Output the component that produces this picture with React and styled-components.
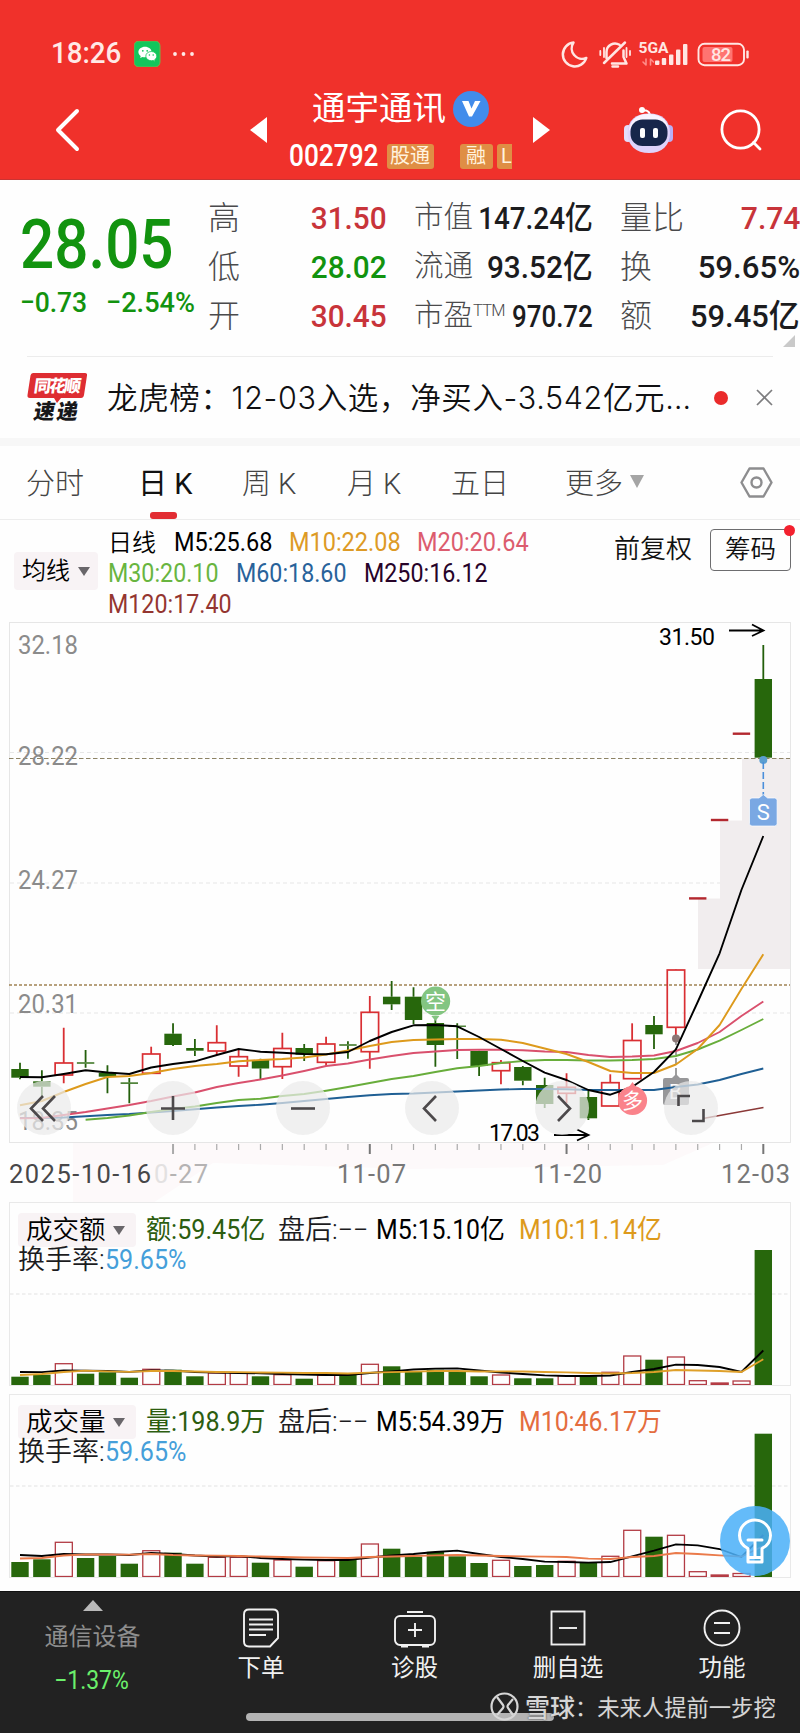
import React from "react";
import styled, { createGlobalStyle } from "styled-components";

const GlobalStyle = createGlobalStyle`
  * { box-sizing: border-box; }
  body {
    margin: 0;
    background: #fff;
    font-family: Roboto, "Noto Sans CJK SC", sans-serif;
    color: #1c1c1e;
  }
`;

const RED = "#c8343a";
const GREEN = "#12930f";
const BAR_GREEN = "#27670c";
const BAR_RED = "#d92f33";

const Page = styled.div`
  position: relative;
  width: 800px;
  height: 1733px;
  overflow: hidden;
  background: #fefefe;
`;

/* text whose glyphs are narrowed, $s is the horizontal scale */
const Num = styled.span`
  display: inline-block;
  white-space: nowrap;
  line-height: 1;
  font-size: ${(p) => p.$size || 25}px;
  font-weight: ${(p) => p.$weight || 400};
  color: ${(p) => p.$color || "#1c1c1e"};
  letter-spacing: ${(p) => p.$ls || 0}px;
  transform: scaleX(${(p) => p.$s || 1});
  transform-origin: ${(p) => p.$origin || "left"} center;
`;

/* ---------- header ---------- */

const HeaderWrapper = styled.header`
  height: 180px;
  padding-top: 39px;
  background: #f0312b;
  border-bottom: 1px solid #c93433;
`;

const StatusBar = styled.div`
  display: flex;
  align-items: center;
  height: 29px;
  padding: 0 51px 0 51px;
`;

const StatusIcons = styled.div`
  display: flex;
  align-items: center;
  margin-left: auto;
`;

const NavRow = styled.div`
  display: flex;
  align-items: center;
  height: 100px;
  padding: 24px 0 0 54px;
`;

const TitleBlock = styled.div`
  display: flex;
  flex-direction: column;
  justify-content: space-between;
  width: 223px;
  height: 90px;
  margin: 5px 21px 0 22px;
`;

const TitleLine = styled.div`
  display: flex;
  align-items: center;
  height: 42px;
  padding-left: 23px;
  font-size: 33.5px;
  line-height: 1;
  color: #fff;
`;

const Verified = styled.span`
  display: flex;
  align-items: center;
  justify-content: center;
  width: 36px;
  height: 36px;
  margin-left: 7px;
  border-radius: 50%;
  background: #428ceb;
`;

const CodeLine = styled.div`
  display: flex;
  align-items: center;
  height: 42px;
  overflow: hidden;
`;

const CodeText = styled.div`
  width: 98px;
`;

const Tag = styled.span`
  flex: none;
  width: ${(p) => p.$w}px;
  height: 25px;
  margin-right: ${(p) => p.$gap || 0}px;
  padding-left: ${(p) => p.$pad || 0}px;
  border-radius: ${(p) => (p.$cut ? "3px 0 0 3px" : "3px")};
  background: #df8e45;
  color: #fff3df;
  font-size: 20px;
  line-height: 24px;
  white-space: nowrap;
`;

/* ---------- quote ---------- */

const Quote = styled.section`
  display: grid;
  grid-template-columns: 189px 178px 178px 179px;
  column-gap: 0;
  height: 176px;
  padding: 13px 0 0 20px;
  position: relative;
`;

const PriceBox = styled.div`
  display: flex;
  flex-direction: column;
  padding-top: 18px;
`;

const Changes = styled.div`
  display: flex;
  gap: 14px;
  margin-top: 10px;
`;

const QuoteCol = styled.div`
  display: grid;
  grid-template-rows: repeat(3, 49px);
  margin-left: ${(p) => p.$shift || 0}px;
  margin-right: -${(p) => p.$shift || 0}px;
`;

const QuoteCell = styled.div`
  display: flex;
  justify-content: space-between;
  align-items: center;
`;

const QuoteLabel = styled.span`
  margin-left: -1px;
  font-size: ${(p) => p.$size || 31}px;
  font-weight: 300;
  line-height: 1;
  color: #4a4a4c;
  white-space: nowrap;

  sup {
    font-size: 16.5px;
    line-height: 0;
    vertical-align: 9px;
    letter-spacing: -0.8px;
  }
`;

const QuoteValue = styled(Num)`
  margin-left: -40px;
`;

const Corner = styled.i`
  position: absolute;
  right: 5px;
  bottom: 9px;
  border-left: 12px solid transparent;
  border-bottom: 12px solid #c9c9c9;
`;

/* ---------- news ---------- */

const News = styled.section`
  display: flex;
  align-items: center;
  height: 82px;
  margin: 0 27px;
  border-top: 1px solid #ececec;
`;

const NewsBadge = styled.div`
  width: 60px;
  height: 50px;
`;

const NewsText = styled.div`
  width: 597px;
  margin-left: 20px;
  padding-bottom: 3px;
  font-family: Inter, "Noto Sans CJK SC", sans-serif;
  font-size: 30.5px;
  font-weight: 350;
  letter-spacing: 0.65px;
  white-space: nowrap;
  color: #101012;
`;

const Dot = styled.i`
  width: 14px;
  height: 14px;
  margin: 0 28px 0 10px;
  border-radius: 50%;
  background: #ea2b2b;
  flex: none;
`;

/* ---------- tabs ---------- */

const Tabs = styled.nav`
  display: grid;
  grid-template-columns: 112px 104px 105px 104px 114px 1fr auto;
  height: 82px;
  padding: 0 27px 0 26px;
  border-top: 8px solid #f7f7f7;
  border-bottom: 1px solid #ededed;
`;

const Tab = styled.div`
  position: relative;
  display: flex;
  align-items: center;
  gap: 7px;
  padding-bottom: ${(p) => (p.$icon ? 0 : 3)}px;
  font-size: 29px;
  font-weight: ${(p) => (p.$active ? 400 : 300)};
  color: ${(p) => (p.$active ? "#111" : "#444")};

  &::after {
    content: "";
    display: ${(p) => (p.$active ? "block" : "none")};
    position: absolute;
    left: 12px;
    bottom: 0;
    width: 27px;
    height: 7px;
    border-radius: 3px;
    background: #e22d33;
  }
`;

const Down = styled.i`
  border: ${(p) => p.$w / 2}px solid transparent;
  border-top: ${(p) => p.$h}px solid ${(p) => p.$color};
  border-bottom: 0;
`;

/* ---------- MA legend ---------- */

const Legend = styled.section`
  display: flex;
  height: 102px;
  padding: 7px 9px 0 14px;
`;

const Picker = styled.div`
  display: flex;
  align-items: center;
  gap: ${(p) => p.$gap || 8}px;
  flex: none;
  width: ${(p) => p.$w}px;
  height: ${(p) => p.$h}px;
  margin-top: ${(p) => p.$mt || 0}px;
  padding-left: 8px;
  border-radius: 4px;
  background: #f8f3f5;
  font-size: ${(p) => p.$size}px;
  font-weight: 350;
  white-space: nowrap;
  line-height: 1;
  color: #000;
`;

const LegendRows = styled.div`
  display: flex;
  flex-direction: column;
  width: 506px;
  margin-left: 10px;
`;

const LegendRow = styled.div`
  display: flex;
  align-items: center;
  height: 31px;
`;

const LegendCell = styled.div`
  width: ${(p) => p.$w}px;
`;

const LegendActions = styled.div`
  display: flex;
  height: 45px;
  font-size: 26px;
  font-weight: 350;
  line-height: 44px;
  color: #111;
`;

const ChipsButton = styled.div`
  position: relative;
  width: 81px;
  height: 42px;
  margin: 2px 0 0 18px;
  border: 1px solid #6d6d6f;
  border-radius: 4px;
  text-align: center;
  font-size: 25.5px;
  line-height: 38px;

  &::after {
    content: "";
    position: absolute;
    right: -5px;
    top: -5px;
    width: 11px;
    height: 11px;
    border-radius: 50%;
    background: #f3202e;
  }
`;

/* ---------- charts ---------- */

const ChartArea = styled.section`
  position: relative;
  height: 580px;

  svg { display: block; }
`;

const Controls = styled.div`
  position: absolute;
  left: 17px;
  top: 459px;
  display: flex;
  gap: 75.4px;
`;

const RoundButton = styled.button`
  width: 54px;
  height: 54px;
  padding: 0;
  border: 0;
  border-radius: 50%;
  background: rgba(234, 234, 234, 0.72);
`;

const VolPanel = styled.section`
  position: relative;
  display: grid;
  height: 184px;
  margin: 0 9px ${(p) => p.$mb || 0}px 9px;
  border: 1px solid #e9e9e9;

  > * { grid-area: 1 / 1; }
`;

const VolHead = styled.div`
  padding: 9px 0 0 8px;
`;

const VolRow = styled.div`
  display: flex;
  align-items: center;
  height: ${(p) => p.$h}px;
`;

const VolCell = styled.div`
  flex: none;
  width: ${(p) => p.$w}px;
  white-space: nowrap;
`;

const BulbButton = styled.div`
  position: absolute;
  left: 720px;
  top: 1506px;
  width: 70px;
  height: 70px;
  border-radius: 50%;
  background: rgba(75, 176, 248, 0.86);
`;

/* ---------- bottom bar ---------- */

const BottomBar = styled.footer`
  display: grid;
  grid-template-columns: 185px 152px 155px 152px 156px;
  height: 143px;
  margin-top: 13px;
  border-top: 1px solid #111;
  background: #222;
`;

const BottomItem = styled.div`
  display: flex;
  flex-direction: column;
  align-items: center;
  padding-top: ${(p) => p.$top || 15}px;
  color: #f1f1f1;
  font-size: 23.5px;
  line-height: 34px;

  svg { display: block; }
`;

const Sector = styled.span`
  margin-top: 9px;
  color: #8e8e8e;
  font-size: 24px;
`;

const SectorChange = styled.div`
  margin: 14px 3px 0 0;
  line-height: 1;
`;

const HomeLine = styled.i`
  position: absolute;
  left: 246px;
  top: 1713px;
  width: 308px;
  height: 8px;
  border-radius: 4px;
  background: #b4b4b4;
`;

const Watermark = styled.div`
  position: absolute;
  left: 490px;
  top: 1690px;
  display: flex;
  align-items: center;
  height: 32px;
  color: #d6d6d6;
  font-size: 22.3px;
  white-space: nowrap;
  text-shadow: 0 0 2px #333;

  b { font-size: 25px; font-weight: 500; margin-left: 6px; }
`;

/* ---------- data ---------- */

const STEP = 21.862;
const cx = (i) => 20 + i * STEP;

// [up, high, top, bottom, low]
const CANDLES = [
  [0, 1062.7, 1069, 1077.7, 1079.3], [0, 1070.3, 1081.3, 1086.7, 1096],
  [1, 1027.7, 1063, 1075, 1083.3], [0, 1050, 1062.3, 1063.7, 1067.7],
  [0, 1065.3, 1072.7, 1076.7, 1093.3], [0, 1078, 1082.4, 1083.8, 1103.3],
  [1, 1046.7, 1054, 1073.3, 1073.3], [0, 1023.3, 1033.7, 1045, 1046],
  [0, 1039, 1048, 1050.7, 1056], [1, 1025.3, 1042.7, 1051, 1055],
  [1, 1050, 1056.7, 1066, 1076.7], [0, 1058.7, 1060, 1068.5, 1079],
  [1, 1032.7, 1048.5, 1066.7, 1079], [0, 1044, 1048, 1054.7, 1061],
  [1, 1036.7, 1044, 1062.3, 1066], [0, 1041.3, 1044.3, 1045.7, 1058.7],
  [1, 996, 1012.3, 1051.7, 1068.7], [0, 981, 996.7, 1004.3, 1010],
  [0, 987.3, 996.7, 1020, 1024], [0, 1019.3, 1023, 1045, 1066.7],
  [0, 1023.3, 1025.6, 1026.8, 1059], [0, 1050.7, 1051, 1066, 1076],
  [1, 1060, 1062.7, 1070.7, 1084.3], [0, 1066, 1067, 1080.7, 1085.3],
  [0, 1077.7, 1085, 1104, 1108], [1, 1073.3, 1087.3, 1093.3, 1103],
  [0, 1090.7, 1097, 1118.3, 1120], [1, 1074.3, 1082.7, 1106, 1106],
  [1, 1023.3, 1040.5, 1078.7, 1078.7], [0, 1016, 1025, 1034.3, 1049],
  [1, 969.5, 970, 1027.3, 1038], [1, 898.4, 898.4, 898.4, 898.4],
  [1, 820, 820, 820, 820], [1, 733.7, 733.7, 733.7, 733.7],
  [0, 645, 679, 757.7, 757.7],
];

const MA = [
  { color: "#1f5f94", from: 0, y: [1118, 1118, 1117.5, 1116.3, 1115, 1114, 1112.5, 1111, 1109.3, 1107.5, 1106, 1104.7, 1103, 1101, 1099, 1097, 1095.3, 1094, 1093.5, 1092.5, 1091.5, 1090.5, 1089.5, 1089, 1089, 1089.3, 1090, 1090, 1090, 1090, 1087, 1084.5, 1080, 1074, 1068.5] },
  { color: "#68ad3b", from: 3, y: [1119.7, 1118, 1115.5, 1112, 1109, 1106.5, 1103, 1100, 1098.7, 1096, 1094, 1090.7, 1087, 1083, 1079, 1076, 1072, 1068.3, 1066, 1063, 1061, 1060, 1060, 1060.5, 1060.5, 1060, 1059, 1056, 1049.5, 1040.7, 1030, 1019] },
  { color: "#d9506d", from: 0, y: [1118.3, 1118, 1115, 1112, 1108.5, 1105, 1101, 1096.5, 1092.5, 1087, 1083, 1079.5, 1075.5, 1071, 1066, 1063.5, 1059.5, 1056, 1053, 1051.5, 1050, 1049.7, 1049.7, 1050.3, 1051.5, 1052, 1055, 1057, 1056.5, 1055.5, 1051, 1043, 1032, 1016, 1001.5] },
  { color: "#dd9a1c", from: 0, y: [1105.3, 1101, 1092, 1084, 1077, 1076, 1073, 1069, 1066, 1064, 1061.3, 1060, 1059, 1057.5, 1054.5, 1050.5, 1046, 1042, 1040, 1039.5, 1039, 1039, 1039.7, 1043, 1048.5, 1054, 1062, 1071, 1073, 1073, 1064.5, 1049, 1025, 989, 954.3] },
  { color: "#000", from: 0, y: [1077, 1077.3, 1074, 1070.3, 1072.5, 1074, 1067.5, 1064, 1061.3, 1055, 1049, 1051.7, 1052.7, 1054, 1054.3, 1052, 1041, 1032, 1025.3, 1025, 1026.3, 1037, 1049, 1061, 1072.7, 1080, 1090, 1094.7, 1087, 1072, 1049.3, 1002, 953.3, 890, 836] },
];

const AMOUNT = {
  bars: [8.3, 10.3, 21.3, 11.3, 12.7, 7.3, 15.7, 15.3, 8.7, 12, 12, 8.7, 10.3, 6.3, 9.7, 10.3, 20.7, 18.7, 13, 15.3, 13.3, 8.7, 10, 6.7, 6.7, 9.3, 8.7, 12.7, 29, 25.3, 28, 4.3, 2, 4, 135],
  ma5: [13, 12.8, 14.5, 14.3, 14, 13.2, 14.5, 14.3, 13, 12.5, 12, 11.7, 11, 10.5, 10, 10, 12, 13.7, 15.5, 16.3, 16.7, 14.5, 12.5, 11, 9.7, 9, 9, 9.5, 13, 16, 20.3, 20, 18, 13, 34.5],
  ma10: [10, 11, 13, 14.3, 13.7, 13.2, 14, 14, 13.5, 13, 12.8, 12.5, 12.3, 12, 12, 11.5, 12.3, 12.8, 13.3, 14, 14, 13.5, 13.7, 13.5, 13, 12.7, 12, 11.5, 12, 13, 15, 14.5, 14, 13, 25.7],
};

const VOLUME = {
  bars: [15, 17.7, 34.7, 19, 21, 13.3, 26.3, 24.3, 13.3, 19.7, 19.7, 14.3, 17, 10.3, 16.3, 17, 33, 28.3, 20.3, 25.3, 20.7, 14, 16.7, 11, 12, 15.7, 14.3, 20.7, 46.7, 40.3, 41.7, 5.3, 2, 3.5, 143.3],
  ma5: [22, 21, 23, 22.5, 22.7, 22, 24, 23, 21.5, 20.5, 21, 19, 18, 17.3, 17, 17, 19.5, 21.5, 23, 25, 26.3, 23, 20, 18, 15.3, 15, 14.3, 15, 20.7, 26.3, 32.7, 31.7, 28, 20, 42],
  ma10: [18.5, 19, 21.5, 22.7, 22.5, 22.3, 23, 22, 21.5, 21.3, 21, 20.5, 20, 19.5, 19.3, 19, 20, 20.5, 21, 21.7, 22, 21.5, 21, 20.7, 20.3, 20, 18.3, 18, 20, 21, 24, 23, 21.7, 20.3, 31],
};

const line = (ys, from = 0) => ys.map((y, i) => `${cx(i + from).toFixed(1)},${y}`).join(" ");

/* ---------- components ---------- */

const Header = () => (
  <HeaderWrapper>
    <StatusBar>
      <Num $size={29.5} $color="#ffe9e6" $weight={500} $s={0.94}>18:26</Num>
      <svg width="64" height="26" viewBox="0 0 64 26" style={{ marginLeft: 8 }}>
        <rect width="26" height="26" rx="5" fill="#13c65c" stroke="#74b24b" />
        <path d="M11 5.8c-3.7 0-6.6 2.3-6.6 5.3 0 1.7.9 3.1 2.3 4l-.5 2 2.3-1.2c.8.2 1.6.4 2.5.4 3.7 0 6.6-2.3 6.6-5.2S14.700 5.800 11 5.800z" fill="#fff" />
        <path d="M17.300 10.500c-3 0-5.500 2-5.500 4.600s2.500 4.600 5.500 4.600c.7 0 1.300-.1 1.900-.3l1.900 1-.4-1.700c1.300-.8 2.100-2.100 2.100-3.600 0-2.600-2.500-4.600-5.500-4.600z" fill="#fff" stroke="#13c65c" strokeWidth=".8" />
        <g fill="#13c65c">
          <circle cx="8.800" cy="9.800" r=".9" /><circle cx="13.200" cy="9.800" r=".9" />
          <circle cx="15.400" cy="14" r=".8" /><circle cx="19.200" cy="14" r=".8" />
        </g>
        <g fill="#ffe9e6">
          <circle cx="41" cy="13" r="1.900" /><circle cx="49.500" cy="13" r="1.900" /><circle cx="58" cy="13" r="1.900" />
        </g>
      </svg>
      <StatusIcons>
        <svg width="188" height="30" viewBox="561 38 188 30" fill="none" stroke="#ffe6e3" strokeWidth="2.500" strokeLinejoin="round" strokeLinecap="round">
          <path d="M573.500 41.500a12 12 0 1 0 12.800 15.500a10.500 10.500 0 0 1-12.800-15.500z" />
          <path d="M606.500 57v-6a8.500 8.500 0 0 1 13-7.200M623.500 49.500v6.500l3 6.500h-14.500M612.500 65.500h5.500M604 62l21-20.500" />
          <path d="M600.300 50v4M604 47v9M630 50v4M626.500 47v9" strokeWidth="1.800" />
          <g fill="#ffe6e3" stroke="none">
            <rect x="655" y="59.500" width="4.400" height="4.500" rx="1" /><rect x="661.800" y="57" width="4.400" height="7" rx="1" />
            <rect x="669" y="53.500" width="4.400" height="10.500" rx="1" /><rect x="676" y="48.500" width="4.400" height="15.500" rx="1" />
            <rect x="683" y="43" width="4.400" height="21" rx="1" />
            <rect x="702.500" y="46" width="30" height="15" rx="2" fill="#ff7471" />
            <rect x="746.300" y="49.500" width="2.400" height="8" rx="1" />
            <text x="638.500" y="51.500" fontSize="15" fontWeight="700" textLength="30" lengthAdjust="spacingAndGlyphs">5GA</text>
            <text x="711" y="60" fontSize="18.500" fontWeight="500" textLength="20">82</text>
          </g>
          <path d="M646 58v6l-3-3M650.500 64v-6l3 3" stroke="#ff8d89" strokeWidth="1.600" />
          <rect x="698.500" y="42.800" width="45.500" height="21.400" rx="6" strokeWidth="1.900" />
        </svg>
      </StatusIcons>
    </StatusBar>
    <NavRow>
      <svg width="26" height="46" viewBox="0 0 26 46" fill="none" stroke="#fff" strokeWidth="4" strokeLinecap="round" strokeLinejoin="round">
        <path d="M23 4L4 23l19 19" />
      </svg>
      <svg width="17" height="26" viewBox="0 0 17 26" style={{ marginLeft: 170 }}>
        <path d="M0 13L17 0v26z" fill="#fff" />
      </svg>
      <TitleBlock>
        <TitleLine>
          通宇通讯
          <Verified>
            <svg width="19" height="17" viewBox="0 0 19 17"><path d="M0 1h6.500l3 7.500L13 1h5.500L10 16.500H7z" fill="#fff" /></svg>
          </Verified>
        </TitleLine>
        <CodeLine>
          <CodeText><Num $size={30.5} $color="#fff" $weight={500} $s={0.86}>002792</Num></CodeText>
          <Tag $w={47} $gap={26} $pad={3}>股通</Tag>
          <Tag $w={33} $gap={4} $pad={6}>融</Tag>
          <Tag $w={15} $pad={4} $cut>L</Tag>
        </CodeLine>
      </TitleBlock>
      <svg width="17" height="26" viewBox="0 0 17 26">
        <path d="M17 13L0 0v26z" fill="#fff" />
      </svg>
      <svg width="50" height="48" viewBox="0 0 50 48" style={{ marginLeft: 74 }}>
        <path d="M18 4.500h4q4 1 4 6" stroke="#fff" strokeWidth="2" fill="none" />
        <circle cx="18" cy="4" r="3" fill="#fff" />
        <rect x="0" y="19" width="8" height="17" rx="4" fill="#e4ddfb" />
        <rect x="41" y="19" width="8" height="17" rx="4" fill="#b9aff5" />
        <path d="M25 7.500c13 0 21 7 21 19.500S38 47 25 47S3.500 39.500 3.500 27S12 7.500 25 7.500z" fill="#ded3fb" />
        <path d="M24 8c11 0 19 5 20 14c-5-7-30-11-39 3C6 14 13 8 24 8z" fill="#f8f4ff" />
        <rect x="6.500" y="13.500" width="37" height="26.500" rx="12" fill="#17264a" />
        <rect x="16" y="22" width="5" height="10" rx="2" fill="#fff" /><rect x="29" y="22" width="5" height="10" rx="2" fill="#fff" />
      </svg>
      <svg width="42" height="42" viewBox="0 0 42 42" style={{ marginLeft: 46 }} fill="none" stroke="#fff" strokeWidth="2.800" strokeLinecap="round">
        <circle cx="20.500" cy="20.500" r="18.600" /><path d="M33.500 33.500l6.500 6.500" />
      </svg>
    </NavRow>
  </HeaderWrapper>
);

const QUOTE_COLS = [
  { shift: 0, rows: [["高", "31.50", RED, 0.93], ["低", "28.02", GREEN, 0.93], ["开", "30.45", RED, 0.93]] },
  { shift: 28, rows: [["市值", "147.24亿", 0, 0.87], ["流通", "93.52亿", 0, 0.93], ["市盈", "970.72", 0, 0.81]] },
  { shift: 56, rows: [["量比", "7.74", RED, 0.94], ["换", "59.65%", 0, 0.975], ["额", "59.45亿", 0, 0.965]] },
];

const QuotePanel = () => (
  <Quote>
    <PriceBox>
      <Num $size={68} $color={GREEN} $weight={500} $s={0.885}>28.05</Num>
      <Changes>
        <Num $size={28.5} $color={GREEN} $weight={500} $s={0.93} $ls={-0.1}>−0.73</Num>
        <Num $size={28.5} $color={GREEN} $weight={500} $s={0.95}>−2.54%</Num>
      </Changes>
    </PriceBox>
    {QUOTE_COLS.map(({ shift, rows }) => (
      <QuoteCol key={shift} $shift={shift}>
        {rows.map(([label, value, color, s]) => (
          <QuoteCell key={label}>
            <QuoteLabel $size={shift === 28 ? 29.5 : 32}>
              {label}
              {label === "市盈" && <sup>TTM</sup>}
            </QuoteLabel>
            <QuoteValue $size={32} $weight={500} $color={color} $s={s} $origin="right">{value}</QuoteValue>
          </QuoteCell>
        ))}
      </QuoteCol>
    ))}
    <Corner />
  </Quote>
);

const NewsBar = () => (
  <News>
    <NewsBadge>
      <svg width="61" height="50" viewBox="0 0 61 50">
        <path d="M6 0h52q2.500 0 2 2.500L57 22q-.5 3-3 3H34l-4 5l-3-5H3q-3 0-2.500-3L3.500 2.500Q4 0 6 0z" fill="#de2d32" />
        <text x="9" y="19.500" fontSize="17" fontWeight="900" fill="#fff" transform="skewX(-8)" textLength="47">同花顺</text>
        <text x="14" y="46.500" fontSize="21" fontWeight="900" fill="#17171a" transform="skewX(-10)" textLength="44">速递</text>
      </svg>
    </NewsBadge>
    <NewsText>龙虎榜：12-03入选，净买入-3.542亿元…</NewsText>
    <Dot />
    <svg width="17" height="17" viewBox="0 0 17 17" stroke="#7d7d7f" strokeWidth="1.700">
      <path d="M1 1l15 15M16 1L1 16" />
    </svg>
  </News>
);

const TabBar = () => (
  <Tabs>
    <Tab>分时</Tab>
    <Tab $active>日 K</Tab>
    <Tab>周 K</Tab>
    <Tab>月 K</Tab>
    <Tab>五日</Tab>
    <Tab>更多 <Down $w={14} $h={13} $color="#a5a5a5" /></Tab>
    <Tab $icon>
      <svg width="33" height="31" viewBox="0 0 33 31" fill="none" stroke="#8d8d8f" strokeWidth="2.400" strokeLinejoin="round">
        <path d="M9.500 1.500h14l8 14l-8 14h-14l-8-14z" /><circle cx="16.500" cy="15.500" r="5" />
      </svg>
    </Tab>
  </Tabs>
);

const MaLegend = () => (
  <Legend>
    <Picker $w={84} $h={38} $size={24} $mt={25}>
      均线 <Down $w={12} $h={9} $color="#69666a" />
    </Picker>
    <LegendRows>
      <LegendRow>
        <LegendCell $w={66}><Num $size={24} $weight={350} $color="#000">日线</Num></LegendCell>
        <LegendCell $w={115}><Num $color="#000" $s={0.94}>M5:25.68</Num></LegendCell>
        <LegendCell $w={128}><Num $color="#dd9a25" $s={0.94}>M10:22.08</Num></LegendCell>
        <LegendCell $w={120}><Num $color="#dc5c6e" $s={0.94}>M20:20.64</Num></LegendCell>
      </LegendRow>
      <LegendRow>
        <LegendCell $w={128}><Num $color="#68b540" $s={0.93}>M30:20.10</Num></LegendCell>
        <LegendCell $w={128}><Num $color="#28629a" $s={0.93}>M60:18.60</Num></LegendCell>
        <LegendCell $w={128}><Num $color="#270329" $s={0.93}>M250:16.12</Num></LegendCell>
      </LegendRow>
      <LegendRow>
        <Num $color="#943530" $s={0.93}>M120:17.40</Num>
      </LegendRow>
    </LegendRows>
    <LegendActions>
      前复权
      <ChipsButton>筹码</ChipsButton>
    </LegendActions>
  </Legend>
);

const Candle = ({ i, data: [up, high, top, bottom, low] }) => {
  const x = cx(i);
  const color = up ? BAR_RED : "#235f0b";
  if (high === low) return <rect x={x - 8.7} y={top - 1.2} width="17.400" height="2.400" fill="#b3282f" />;
  return (
    <g>
      <path d={`M${x} ${high}V${top}M${x} ${bottom}V${low}`} stroke={color} strokeWidth="1.800" />
      {up ? (
        <rect x={x - 8.6} y={top} width="17.400" height={bottom - top} fill="none" stroke={color} strokeWidth="1.700" />
      ) : (
        <rect x={x - 8.7} y={top} width="17.400" height={bottom - top} fill={BAR_GREEN} />
      )}
    </g>
  );
};

const PRICES = [["32.18", 653.5], ["28.22", 765], ["24.27", 889], ["20.31", 1013], ["18.35", 1130]];
const DATES = [["11-07", 337], ["11-20", 533], ["12-03", 721]];

const KLine = () => (
  <ChartArea>
    <svg width="800" height="580" viewBox="0 622 800 580">
      <path d="M73 1143h640l-50 22l-250 4l-200-6l-60 40H73z" fill="#fdf9fa" />
      <rect x="9.500" y="622.500" width="781" height="520" fill="none" stroke="#e6e6e6" />
      <g stroke="#e6e6e6" strokeDasharray="4 3">
        <path d="M10 752.500H790M10 883H790M10 1013H790" />
      </g>
      <path d="M742 758H790V969H698V898.500H720V820.500H742z" fill="#f1edee" />
      <path d="M9 758.500H790" stroke="#8d8365" strokeDasharray="4.500 2.500" strokeWidth="1.200" />
      <path d="M9 985H790" stroke="#a08253" strokeDasharray="3 2" strokeWidth="1.400" />
      {PRICES.map(([text, y]) => (
        <text key={text} x="18" y={y} fontSize="25.500" fill="#8b8b8b" textLength="60" lengthAdjust="spacingAndGlyphs">{text}</text>
      ))}
      {CANDLES.map((c, i) => <Candle key={i} i={i} data={c} />)}
      <g opacity=".92">
        <path d="M676 1038V1076" stroke="#777" strokeDasharray="7 3" strokeWidth="1.500" />
        <path d="M665 1078h7l4-4l4 4h7q2 0 2 2v23q0 2-2 2h-22q-2 0-2-2v-23q0-2 2-2z" fill="#8f8f91" />
        <text x="669" y="1099" fontSize="20" fill="#fff">B</text>
      </g>
      <circle cx="676" cy="1038.500" r="4" fill="#8b7776" />
      {MA.map((m) => (
        <polyline key={m.color} points={line(m.y, m.from)} fill="none" stroke={m.color} strokeWidth="1.900" strokeLinejoin="round" />
      ))}
      <path d="M703 1118.500L763.500 1107.500" stroke="#8b3938" strokeWidth="1.600" />
      <path d="M435.400 1021l-4-5h8z" fill="#83c581" />
      <circle cx="435.600" cy="1001" r="14.600" fill="#83c581" />
      <text x="435.600" y="1008.500" fontSize="21" fill="#fff" textAnchor="middle">空</text>
      <path d="M632.500 1082l-5 7h10z" fill="#fa838b" />
      <circle cx="632.500" cy="1100.500" r="14.600" fill="#fa838b" />
      <text x="632.500" y="1108" fontSize="21" fill="#fff" textAnchor="middle">多</text>
      <circle cx="763.300" cy="760" r="4" fill="#5b9ed0" />
      <path d="M763.300 762V798" stroke="#4a8fdb" strokeDasharray="7 3" strokeWidth="1.600" />
      <path d="M752 798h7l4.300-3.500l4.300 3.500h7q2.500 0 2.500 2.500v23q0 2.500-2.500 2.500h-22.600q-2.500 0-2.500-2.500v-23q0-2.500 2.500-2.500z" fill="#7aa8e3" stroke="#fff" strokeOpacity=".7" />
      <text x="763.300" y="820" fontSize="22" fill="#fff" textAnchor="middle">S</text>
      <g fill="none" stroke="#000" strokeWidth="1.800">
        <path d="M729 630.500h34M752 624.500l11.500 6l-11.500 5.500" />
        <path d="M554 1135h34M577 1129.500l11.500 5.500l-11.500 5.500" />
      </g>
      <text x="659" y="645" fontSize="23" fill="#000" textLength="56">31.50</text>
      <text x="489" y="1141" fontSize="23" fill="#000" textLength="51">17.03</text>
      {CANDLES.map((_, i) => i >= 7 && (
        <path key={i} d={`M${cx(i)} 1144V${(i - 7) % 9 ? 1150 : 1154}`} stroke={i > 7 && (i - 7) % 9 === 0 ? "#777" : "#aaa"} strokeWidth={(i - 7) % 9 ? 1.200 : 2} />
      ))}
      <g fontSize="25.500" fill="#777">
        <text x="9" y="1182.500" fill="#474749" textLength="142" lengthAdjust="spacing">2025-10-16</text>
        <text x="154" y="1182.500" fill="#b5b3b3" textLength="54"><tspan fill="#e3e1e1">0</tspan>-27</text>
        {DATES.map(([d, x]) => <text key={d} x={x} y="1182.500" textLength="69">{d}</text>)}
      </g>
    </svg>
    <Controls>
      {[
        "M26 15L14 27.500L26 40M38 15L26 27.500L38 40",
        "M15 27.500H39M27 15V39",
        "M15 27.500H39",
        "M31 15L19 27.500L31 40",
        "M23 15L35 27.500L23 40",
        "M14.500 25V15H26M39.500 28V40H28",
      ].map((d) => (
        <RoundButton key={d}>
          <svg width="54" height="54" viewBox="0 0 54 54" fill="none" stroke="#4c494b" strokeWidth="2.600"><path d={d} /></svg>
        </RoundButton>
      ))}
    </Controls>
  </ChartArea>
);

const Volume = ({ name, label, value, m5, m10, m10Color, lineColor, data, mb }) => (
  <VolPanel $mb={mb}>
    <svg width="780" height="182" viewBox="10 0 780 182">
      <path d="M10 91H790" stroke="#e2e2e2" strokeDasharray="3.500 2.500" />
      {data.bars.map((h, i) =>
        CANDLES[i][0] ? (
          <rect key={i} x={cx(i) - 8.4} y={182 - h} width="17" height={h - 0.5} fill={h < 3 ? "#c7474b" : "none"} stroke="#b23b44" strokeWidth="1.300" />
        ) : (
          <rect key={i} x={cx(i) - 8.7} y={182 - h} width="17.400" height={h} fill={BAR_GREEN} />
        )
      )}
      <polyline points={line(data.ma5.map((v) => 182 - v))} fill="none" stroke="#000" strokeWidth="1.800" />
      <polyline points={line(data.ma10.map((v) => 182 - v))} fill="none" stroke={lineColor} strokeWidth="1.800" />
    </svg>
    <VolHead>
      <VolRow $h={36}>
        <VolCell $w={128}>
          <Picker $w={118} $h={34} $size={26.5} $gap={7}>{name} <Down $w={12} $h={9} $color="#69666a" /></Picker>
        </VolCell>
        <VolCell $w={132}><Num $size={27} $color="#2c5d0f" $s={0.93}>{label}:{value}</Num></VolCell>
        <VolCell $w={98}><Num $size={27} $weight={350} $s={1}>盘后:−−</Num></VolCell>
        <VolCell $w={143}><Num $size={27} $color="#000" $s={0.92}>{m5}</Num></VolCell>
        <VolCell $w={150}><Num $size={27} $color={m10Color} $s={0.92}>{m10}</Num></VolCell>
      </VolRow>
      <VolRow $h={24}>
        <Num $size={27} $weight={350}>换手率:</Num>
        <Num $size={27} $color="#459fda" $s={0.93}>59.65%</Num>
      </VolRow>
    </VolHead>
  </VolPanel>
);

const Footer = () => (
  <BottomBar>
    <BottomItem $top={8}>
      <svg width="20" height="11" viewBox="0 0 20 11"><path d="M0 11L10 0l10 11z" fill="#b9b9b9" /></svg>
      <Sector>通信设备</Sector>
      <SectorChange>
        <Num $size={25.5} $color="#6bf06b" $s={0.9} $origin="center">−1.37%</Num>
      </SectorChange>
    </BottomItem>
    <BottomItem>
      <svg width="40" height="44" viewBox="0 0 40 44" fill="none" stroke="#f1f1f1" strokeWidth="1.900">
        <path d="M8 2.500h24q5 0 5 5V31l-8 8.500H8q-5 0-5-5v-27q0-5 5-5z" />
        <path d="M8 12.500h24M8 17.500h24M8 22.500h24M8 28h17" />
      </svg>
      下单
    </BottomItem>
    <BottomItem>
      <svg width="44" height="44" viewBox="0 0 44 44" fill="none" stroke="#f1f1f1" strokeWidth="1.900">
        <rect x="2" y="9" width="40" height="29" rx="5" />
        <path d="M14 5h16M22 16v14M15 23h14M8 39.500h7M29 39.500h7" />
      </svg>
      诊股
    </BottomItem>
    <BottomItem>
      <svg width="40" height="44" viewBox="0 0 40 44" fill="none" stroke="#f1f1f1" strokeWidth="1.900">
        <rect x="3.500" y="4.500" width="33" height="33" /><path d="M11 21h18" />
      </svg>
      删自选
    </BottomItem>
    <BottomItem>
      <svg width="40" height="44" viewBox="0 0 40 44" fill="none" stroke="#f1f1f1" strokeWidth="1.900">
        <circle cx="20" cy="21" r="17.500" /><path d="M12 16h16M12 26h16" />
      </svg>
      功能
    </BottomItem>
  </BottomBar>
);

const App = () => (
  <Page>
    <GlobalStyle />
    <Header />
    <QuotePanel />
    <NewsBar />
    <TabBar />
    <MaLegend />
    <KLine />
    <Volume
      name="成交额" label="额" value="59.45亿" m5="M5:15.10亿" m10="M10:11.14亿"
      m10Color="#dd9a1c" lineColor="#dfa02a" data={AMOUNT} mb={8}
    />
    <Volume
      name="成交量" label="量" value="198.9万" m5="M5:54.39万" m10="M10:46.17万"
      m10Color="#e46d3f" lineColor="#ea7a4a" data={VOLUME}
    />
    <Footer />
    <BulbButton>
      <svg width="70" height="70" viewBox="0 0 70 70" fill="none" stroke="#fff" strokeWidth="3" strokeLinecap="round" strokeLinejoin="round">
        <path d="M28 47v-4.500c-5-2.500-8.500-7.500-8.500-13a15.500 15.500 0 0 1 31 0c0 5.500-3.500 10.500-8.500 13V47M28 47v9h14v-9M28 51.500h14M35 34v16M28 34h14" />
      </svg>
    </BulbButton>
    <HomeLine />
    <Watermark>
      <svg width="29" height="29" viewBox="0 0 29 29" fill="none" stroke="#d6d6d6" strokeWidth="2.200">
        <circle cx="14.500" cy="14.500" r="13" />
        <path d="M7 5l6 8q1 1.500 0 3l-6 7M23 7l-5 6q-1 1.500 0 3l5 7" />
      </svg>
      <b>雪球</b>：未来人提前一步挖
    </Watermark>
  </Page>
);

export default App;
